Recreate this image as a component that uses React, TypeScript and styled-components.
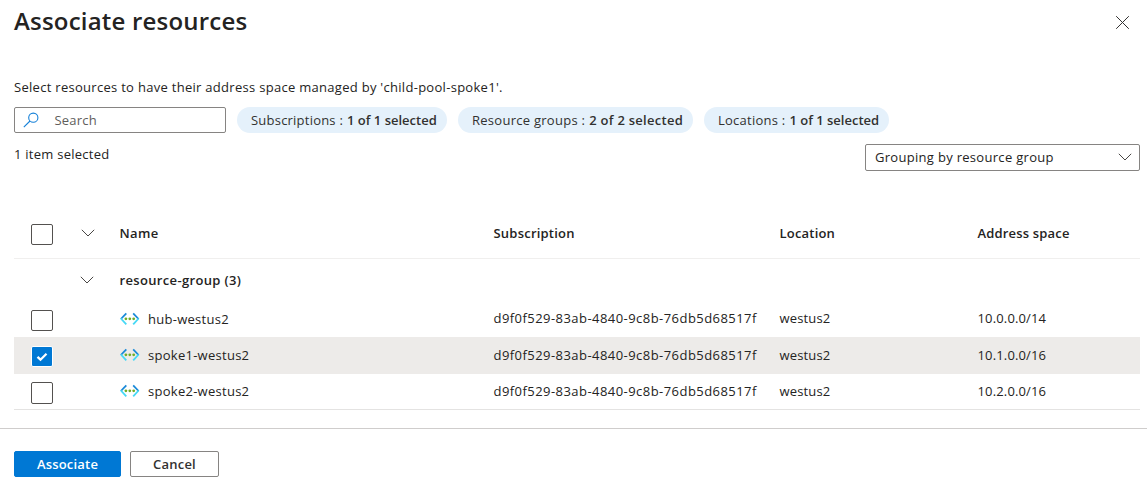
import React from "react";
import styled, { createGlobalStyle } from "styled-components";

const GlobalStyle = createGlobalStyle`
  * { box-sizing: border-box; }
  body { margin: 0; background: #fff; }
`;

const Panel = styled.main`
  display: flex;
  flex-direction: column;
  height: 492px;
  color: #242322;
  font: 400 13px/18px "Open Sans", "Noto Sans", sans-serif;
  overflow: hidden;
`;

const Text = styled.span<{ $track?: number; $strong?: boolean }>`
  letter-spacing: ${(p) => p.$track ?? 0}px;
  font-weight: ${(p) => (p.$strong ? 600 : 400)};
  white-space: nowrap;
`;

const Header = styled.header`
  display: flex;
  justify-content: space-between;
  height: 78px;
  padding: 4px 17px 0 14px;
`;

const Title = styled.h1`
  margin: 0;
  font-size: 24px;
  line-height: 34px;
  font-weight: 600;
  letter-spacing: 0.2px;
`;

const CloseButton = styled.button`
  align-self: flex-start;
  display: flex;
  margin-top: 11px;
  padding: 0;
  border: 0;
  background: none;
`;

const Description = styled.p`
  margin: 0 0 11px 14px;
  height: 18px;
`;

const Filters = styled.div`
  display: flex;
  gap: 11px;
  margin-left: 14px;
  height: 26px;
`;

const SearchBox = styled.div`
  display: flex;
  align-items: center;
  width: 212px;
  padding: 0 0 0 7.5px;
  gap: 16px;
  border: 1px solid #868482;
  border-radius: 2px;
  color: #605e5c;
`;

const Pill = styled.div<{ $width: number }>`
  display: flex;
  align-items: center;
  gap: 4px;
  width: ${(p) => p.$width}px;
  padding-left: 14px;
  border-radius: 13px;
  background: #e5f1fb;
  color: #323130;
`;

const Summary = styled.div`
  display: flex;
  justify-content: space-between;
  align-items: flex-start;
  height: 76px;
  padding: 11px 7px 0 14px;
`;

const Count = styled.div`
  padding-top: 1px;
`;

const Select = styled.div`
  display: flex;
  align-items: center;
  justify-content: space-between;
  width: 275px;
  height: 27px;
  padding: 0 7px 1px 9px;
  border: 1px solid #868482;
  border-radius: 2px;
`;

const Table = styled.section`
  margin: 0 7px 0 14px;
  border-bottom: 1px solid #e4e3e2;
`;

const Row = styled.div<{ $height: number; $selected?: boolean; $ruled?: boolean }>`
  display: grid;
  grid-template-columns: 65.5px 40px 374px 286px 198px 1fr;
  align-items: center;
  height: ${(p) => p.$height}px;
  background: ${(p) => (p.$selected ? "#edebe9" : "transparent")};
  border-bottom: ${(p) => (p.$ruled ? "1px solid #f0efee" : "0")};
`;

const Cell = styled.div<{ $top?: number }>`
  display: flex;
  align-items: center;
  align-self: start;
  height: 18px;
  margin-top: ${(p) => p.$top ?? 0}px;
`;

const CheckCell = styled.div<{ $top?: number }>`
  align-self: start;
  padding: ${(p) => p.$top ?? 0}px 0 0 17px;
`;

const Check = styled.div<{ $on?: boolean; $tall?: boolean }>`
  display: flex;
  align-items: center;
  justify-content: center;
  width: 22px;
  height: ${(p) => (p.$tall ? 22 : 21)}px;
  border: 1px solid ${(p) => (p.$on ? "#fff" : "#53514f")};
  border-radius: 2px;
  background: ${(p) => (p.$on ? "#0078d4" : "#fff")};
`;

const ToggleCell = styled.div<{ $top: number; $inset?: number }>`
  display: flex;
  align-self: start;
  padding: ${(p) => p.$top}px 0 0 ${(p) => p.$inset ?? 0}px;
`;

const NetworkSlot = styled.span`
  display: flex;
  align-items: center;
  width: 28.5px;
  height: 18px;
  padding-bottom: 1px;
`;

const Footer = styled.footer`
  display: flex;
  gap: 9px;
  margin-top: 18px;
  padding: 22px 14px 0;
  border-top: 1px solid #cfcdcc;
`;

const Button = styled.button<{ $primary?: boolean }>`
  display: flex;
  align-items: center;
  justify-content: center;
  width: ${(p) => (p.$primary ? 107 : 89)}px;
  height: 26px;
  padding: 0;
  border: 1px solid ${(p) => (p.$primary ? "#0078d4" : "#868482")};
  border-radius: 2px;
  background: ${(p) => (p.$primary ? "#0078d4" : "#fff")};
  color: ${(p) => (p.$primary ? "#fff" : "#323130")};
  font: inherit;
`;

const Chevron = () => (
  <svg width="14" height="8" viewBox="0 0 14 8" fill="none" stroke="#484644" strokeWidth="1">
    <path d="M.8.8 7 7 13.2.8" />
  </svg>
);

const CloseIcon = () => (
  <svg width="15" height="15" viewBox="0 0 15 15" fill="none" stroke="#323130" strokeWidth="1">
    <path d="m1.2 1.2 12.6 12.6M13.8 1.2 1.2 13.8" />
  </svg>
);

const SearchIcon = () => (
  <svg width="16" height="16" viewBox="0 0 16 16" fill="none" stroke="#1580d8" strokeWidth="1.1">
    <circle cx="10.3" cy="5.7" r="4.6" />
    <path d="M7 9 .8 15.2" />
  </svg>
);

const CheckMark = () => (
  <svg width="12" height="10" viewBox="0 0 12 10" fill="none" stroke="#fff" strokeWidth="2.3">
    <path d="m1.5 4.8 3 2.9 6-5.9" />
  </svg>
);

const NetworkIcon = () => (
  <svg width="20" height="14" viewBox="0 0 20 14" fill="none" strokeWidth="1.8">
    <path d="M6.3 1.3.9 7" stroke="#1989d8" />
    <path d="m.9 6.5 5.4 5.9" stroke="#45d8f5" />
    <path d="M13.2 1.3 18.6 7" stroke="#1989d8" />
    <path d="m18.6 6.5-5.4 5.9" stroke="#45d8f5" />
    <g fill="#70ad28">
      <circle cx="5.9" cy="6.8" r="1.4" />
      <circle cx="9.8" cy="6.8" r="1.4" />
      <circle cx="13.7" cy="6.8" r="1.4" />
    </g>
  </svg>
);

const filters = [
  { label: "Subscriptions :", value: "1 of 1 selected", width: 210, track: 0.22, valueTrack: 0 },
  { label: "Resource groups :", value: "2 of 2 selected", width: 235, track: 0.27, valueTrack: 0.27 },
  { label: "Locations :", value: "1 of 1 selected", width: 185, track: 0.24, valueTrack: 0 },
];

const resources = [
  { name: "hub-westus2", track: 0.27, space: "10.0.0.0/14", height: 36, top: 8, nameTop: 9, checkTop: 9 },
  { name: "spoke1-westus2", track: 0.27, space: "10.1.0.0/16", height: 37, top: 9, nameTop: 9, checkTop: 9, on: true },
  { name: "spoke2-westus2", track: 0.27, space: "10.2.0.0/16", height: 35, top: 8, nameTop: 8, checkTop: 8, tall: true },
];

export default function App() {
  return (
    <Panel>
      <GlobalStyle />
      <Header>
        <Title>Associate resources</Title>
        <CloseButton aria-label="Close"><CloseIcon /></CloseButton>
      </Header>
      <Description>
        <Text $track={0.29}>Select resources to have their address space managed by 'child-pool-spoke1'.</Text>
      </Description>
      <Filters>
        <SearchBox><SearchIcon /><Text $track={0.2}>Search</Text></SearchBox>
        {filters.map((f) => (
          <Pill key={f.label} $width={f.width}>
            <Text $track={f.track}>{f.label}</Text>
            <Text $strong $track={f.valueTrack}>{f.value}</Text>
          </Pill>
        ))}
      </Filters>
      <Summary>
        <Count><Text $track={0.25}>1 item selected</Text></Count>
        <Select><Text $track={0.3}>Grouping by resource group</Text><Chevron /></Select>
      </Summary>
      <Table>
        <Row $height={50} $ruled>
          <CheckCell $top={15}><Check /></CheckCell>
          <ToggleCell $top={20} $inset={1}><Chevron /></ToggleCell>
          <Cell $top={15}><Text $strong $track={0.35}>Name</Text></Cell>
          <Cell $top={15}><Text $strong $track={0.22}>Subscription</Text></Cell>
          <Cell $top={15}><Text $strong $track={0.2}>Location</Text></Cell>
          <Cell $top={15}><Text $strong $track={0.17}>Address space</Text></Cell>
        </Row>
        <Row $height={42}>
          <span />
          <ToggleCell $top={17}><Chevron /></ToggleCell>
          <Cell $top={12}><Text $strong $track={0.34}>resource-group (3)</Text></Cell>
        </Row>
        {resources.map((r) => (
          <Row key={r.name} $height={r.height} $selected={r.on}>
            <CheckCell $top={r.checkTop}>
              <Check $on={r.on} $tall={r.tall}>{r.on && <CheckMark />}</Check>
            </CheckCell>
            <span />
            <Cell $top={r.nameTop}>
              <NetworkSlot><NetworkIcon /></NetworkSlot>
              <Text $track={r.track}>{r.name}</Text>
            </Cell>
            <Cell $top={r.top}><Text $track={0.45}>d9f0f529-83ab-4840-9c8b-76db5d68517f</Text></Cell>
            <Cell $top={r.top}><Text $track={0.15}>westus2</Text></Cell>
            <Cell $top={r.top}><Text $track={0.15}>{r.space}</Text></Cell>
          </Row>
        ))}
      </Table>
      <Footer>
        <Button $primary><Text $strong $track={0.2}>Associate</Text></Button>
        <Button><Text $strong $track={0.22}>Cancel</Text></Button>
      </Footer>
    </Panel>
  );
}
